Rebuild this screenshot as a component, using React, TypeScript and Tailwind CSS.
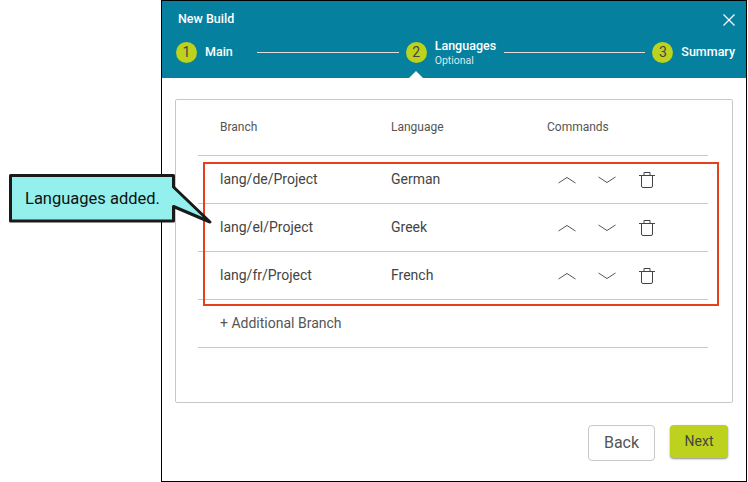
import React from "react";

const rows = [
  { branch: "lang/de/Project", language: "German" },
  { branch: "lang/el/Project", language: "Greek" },
  { branch: "lang/fr/Project", language: "French" },
];

const Chevron = ({ up }: { up?: boolean }) => (
  <svg width="18" height="8" viewBox="0 0 18 8" fill="none" stroke="#555" strokeWidth="1">
    <path d={up ? "M0.5 7 L9 1.5 L17.5 7" : "M0.5 1 L9 6.5 L17.5 1"} />
  </svg>
);

const Trash = () => (
  <svg width="18" height="18" viewBox="0 0 18 18" fill="none" stroke="#444" strokeWidth="1">
    <path d="M1 4.5 H17 M6 4.5 V1.5 H12 V4.5 M3.5 4.5 V15 Q3.5 16.5 5 16.5 H13 Q14.5 16.5 14.5 15 V4.5" />
  </svg>
);

const Step = ({ n }: { n: number }) => (
  <span className="flex h-[21px] w-[21px] shrink-0 items-center justify-center rounded-full bg-[#bcd21c] text-[14px] text-[#444]">
    {n}
  </span>
);

export default function App() {
  return (
    <div className="relative h-[482px] w-[748px] overflow-hidden bg-white font-['Roboto',sans-serif]">
      <div className="ml-[161px] flex h-[482px] w-[586px] flex-col border border-black bg-white">
        {/* header */}
        <div className="relative h-[77px] shrink-0 bg-[#05809f] pl-[14px] pr-[11px] text-white">
          <div className="flex h-[25px] items-end justify-between pl-[2px]">
            <span className="text-[12.5px] font-medium leading-[14px]">New Build</span>
            <svg width="12" height="12" viewBox="0 0 12 12" stroke="white" strokeWidth="1.2">
              <path d="M0.5 0.5 L11.5 11.5 M11.5 0.5 L0.5 11.5" />
            </svg>
          </div>
          <div className="mt-[16px] flex h-[21px] items-center">
            <Step n={1} />
            <span className="ml-[8px] w-[52px] text-[12.5px] font-medium">Main</span>
            <div className="h-px w-[142px] bg-[#e4dada]" />
            <div className="ml-[7px]">
              <Step n={2} />
            </div>
            <div className="ml-[8px] w-[69px]">
              <div className="text-[12.5px] font-medium leading-[14px]">Languages</div>
              <div className="mt-px text-[10.5px] leading-[13px] text-[#d5e8ee]">Optional</div>
            </div>
            <div className="h-px w-[142px] bg-[#e4dada]" />
            <div className="ml-[7px]">
              <Step n={3} />
            </div>
            <span className="ml-[8px] text-[12.5px] font-medium">Summary</span>
          </div>
          <div className="absolute bottom-0 left-[247px] h-0 w-0 border-x-[7px] border-b-[7px] border-x-transparent border-b-white" />
        </div>

        {/* card */}
        <div className="mx-[13px] mt-[21px] h-[304px] shrink-0 rounded-[2px] border border-[#c8c8c8] px-[22px]">
          <div className="grid h-[56px] w-[510px] grid-cols-[171px_156px_1fr] items-center border-b border-[#c8c8c8] pb-[2px] pl-[22px] text-[12px] text-[#555]">
            <span>Branch</span>
            <span>Language</span>
            <span>Commands</span>
          </div>
          {rows.map((r) => (
            <div
              key={r.branch}
              className="grid h-[48px] w-[510px] grid-cols-[171px_156px_1fr] items-center border-b border-[#c8c8c8] pl-[22px] text-[14px] text-[#444]"
            >
              <span>{r.branch}</span>
              <span>{r.language}</span>
              <div className="flex items-center gap-[22px] pl-[11px]">
                <Chevron up />
                <Chevron />
                <Trash />
              </div>
            </div>
          ))}
          <div className="flex h-[48px] w-[510px] items-center border-b border-[#c8c8c8] pl-[22px] text-[14px] text-[#555]">
            + Additional Branch
          </div>
        </div>

        {/* footer */}
        <div className="mt-[22px] flex items-start justify-end gap-[15px] pr-[18px]">
          <button className="h-[36px] w-[67px] rounded-[4px] border border-[#c8c8c8] bg-white text-[16px] text-[#555]">
            Back
          </button>
          <button className="h-[33px] w-[58px] rounded-[4px] bg-[#bcd21c] text-[14px] text-[#444] shadow-[0_1px_2px_rgba(0,0,0,0.45)]">
            Next
          </button>
        </div>
      </div>

      {/* annotation */}
      <div className="absolute left-[203px] top-[162px] h-[144px] w-[516px] border-2 border-[#e4401c]" />
      <div className="absolute left-[8px] top-[173px] h-[54px] w-[206px]">
        <svg className="absolute inset-0" width="206" height="54" viewBox="0 0 206 54">
          <path
            d="M2.5 2.5 H165.5 V14 L202 49 L165.5 33.5 V48 H2.5 Z"
            fill="#93f0ec"
            stroke="#1a1a1a"
            strokeWidth="3"
            strokeLinejoin="round"
          />
        </svg>
        <span className="absolute left-[17px] top-[15.5px] text-[16.5px] leading-[20px] text-[#111]">
          Languages added.
        </span>
      </div>
    </div>
  );
}
